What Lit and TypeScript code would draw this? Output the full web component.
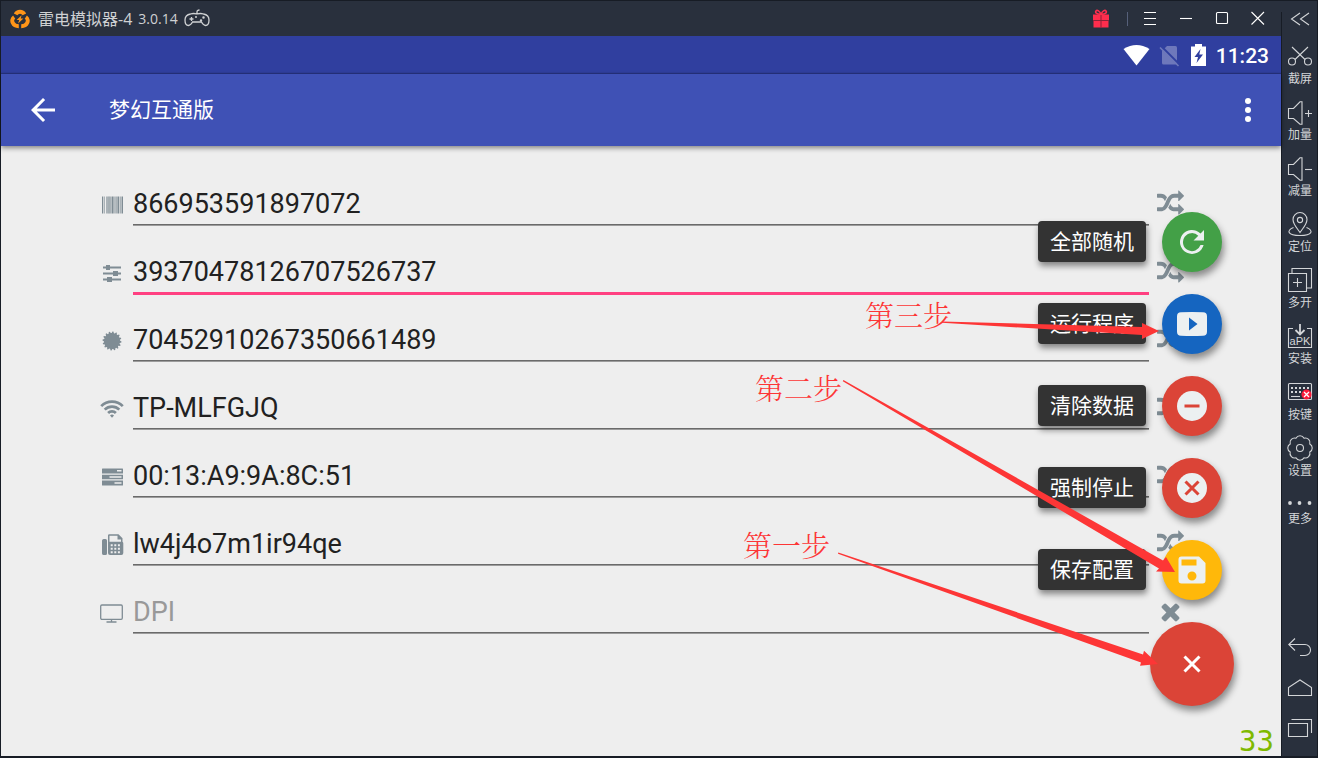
import { LitElement, html, svg, css, nothing } from "lit";
import type { SVGTemplateResult } from "lit";
import { customElement, state } from "lit/decorators.js";
import { classMap } from "lit/directives/class-map.js";

interface Field {
  id: string;
  label: string;
  value: string;
  placeholder?: string;
  icon: SVGTemplateResult;
  action: "shuffle" | "clear";
}

interface Tool {
  label: string;
  icon: SVGTemplateResult;
  short?: boolean;
}

interface QuickAction {
  label: string;
  tone: string;
  icon: SVGTemplateResult;
}

const gearPoints = (teeth: number, outer: number, inner: number): string => {
  const points: string[] = [];
  for (let i = 0; i < teeth * 4; i++) {
    const radius = i % 4 < 2 ? outer : inner;
    const angle = ((i + 0.5) / (teeth * 4)) * Math.PI * 2;
    points.push(`${(12 + radius * Math.sin(angle)).toFixed(2)},${(12 - radius * Math.cos(angle)).toFixed(2)}`);
  }
  return points.join(" ");
};

const scallop = (count: number, radius: number): string => {
  const at = (i: number) => {
    const a = ((i + 0.5) / count) * Math.PI * 2;
    return `${(12 + radius * Math.sin(a)).toFixed(2)} ${(12 - radius * Math.cos(a)).toFixed(2)}`;
  };
  let d = `M${at(0)}`;
  for (let i = 1; i <= count; i++) d += `A4.6 4.6 0 0 1 ${at(i)}`;
  return d + "Z";
};

const barcode = svg`<g>
  <path d="M2 3.500h1v17h-1zM8.500 3.500h1v17h-1zM11.500 3.500h1.500v17h-1.500zM14.500 3.500h1v17h-1zM18 3.500h1v17h-1zM21.500 3.500h1.500v17h-1.500z"/>
  <path opacity=".6" d="M3.500 3.500h1.500v17H3.500zM6 3.500h2.500v17H6zM9.500 3.500h1.500v17H9.500zM13 3.500h1v17h-1zM16 3.500h2v17h-2zM19.500 3.500h1.500v17h-1.500z"/></g>`;
const sliders = svg`<path d="M3 5.500h3V4h4v1.500h11v2H10V9H6V7.500H3zM3 11.500h10V10h5v1.500h3v2h-3V15h-5v-1.500H3zM3 17.500h4V16h5v1.500h9v2h-9V21H7v-1.500H3z"/>`;
const certificate = svg`<polygon points=${gearPoints(16, 9.5, 8)}/>`;
const wifi = svg`<g fill="none" stroke="currentColor" stroke-width="2.700">
  <path d="M1.200 9.100a15.300 15.300 0 0 1 21.600 0M4.700 12.600a10.300 10.300 0 0 1 14.600 0M8.100 16a5.500 5.500 0 0 1 7.800 0"/>
  <path d="M10 18.500a3 3 0 0 1 4 0L12 20.800z" fill="currentColor" stroke="none"/></g>`;
const server = svg`<path fill-rule="evenodd" d="M2.500 3.500h20a.5.500 0 0 1 .5.500v4.500h-21V4a.5.500 0 0 1 .5-.5zM17 5v1.500h4.500V5zM2 9.700h21v4.600h-21zM9.500 11.300v1.400h12v-1.400zM2 15.500h21V20a.5.500 0 0 1-.5.500h-20a.5.500 0 0 1-.5-.5zM14.500 17.300v1.500h7v-1.500z"/>`;
const fax = svg`<path transform="translate(.5 .500)" fill-rule="evenodd" d="M3.500 5.500H5A1.500 1.500 0 0 1 6.500 7v13A1.500 1.500 0 0 1 5 21.500H3.500A1.800 1.800 0 0 1 1.500 20V7a1.800 1.800 0 0 1 2-1.500zM7.500 2A1.200 1.200 0 0 1 8.700.800H18l4 4V8.300a2 2 0 0 1 .8 1.700v9.500a2 2 0 0 1-2 2H9.500a2 2 0 0 1-2-2zM9 2.200v6h11.500V6H17V2.200zM10.200 10.700v2h2v-2zm3.600 0v2h2v-2zm3.600 0v2h2v-2zM10.200 14.300v2h2v-2zm3.600 0v2h2v-2zm3.600 0v2h2v-2zM10.200 17.800v2h2v-2zm3.600 0v2h2v-2zm3.600 0v2h2v-2z"/>`;
const monitor = svg`<g fill="none" stroke="currentColor" stroke-width="1.300">
  <rect x=".7" y="4" width="21.600" height="14.300" rx="1.200"/><path d="M11.500 18.300v2.500M6.500 21h10"/></g>`;

const FIELDS: Field[] = [
  { id: "imei", label: "IMEI", value: "866953591897072", icon: barcode, action: "shuffle" },
  { id: "iccid", label: "ICCID", value: "39370478126707526737", icon: sliders, action: "shuffle" },
  { id: "serial", label: "Serial", value: "70452910267350661489", icon: certificate, action: "shuffle" },
  { id: "ssid", label: "SSID", value: "TP-MLFGJQ", icon: wifi, action: "shuffle" },
  { id: "mac", label: "MAC", value: "00:13:A9:9A:8C:51", icon: server, action: "shuffle" },
  { id: "device", label: "Device", value: "lw4j4o7m1ir94qe", icon: fax, action: "shuffle" },
  { id: "dpi", label: "DPI", value: "", placeholder: "DPI", icon: monitor, action: "clear" },
];

const SHUFFLE =
  "M666 481q-60 92-137 273-22-45-37-72.5t-40.5-63.5-51-56.5-63-35-81.5-14.5h-224q-14 0-23-9t-9-23v-192q0-14 9-23t23-9h224q250 0 410 225zm1126 799q0 14-9 23l-320 320q-9 9-23 9-13 0-22.5-9.5t-9.5-22.5v-192q-32 0-85 .5t-81 1-73-1-71-5-64-10.5-63-18.5-58-28.5-59-40-55-53.5-56-69.5q59-93 136-273 22 45 37 72.5t40.5 63.5 51 56.5 63 35 81.5 14.5h256v-192q0-14 9-23t23-9q12 0 24 10l319 319q9 9 9 23zm0-896q0 14-9 23l-320 320q-9 9-23 9-13 0-22.5-9.5t-9.5-22.5v-192h-256q-48 0-87 15t-69 45-51 61.5-45 77.5q-32 62-78 171-29 66-49.5 111t-54 105-64 100-74 83-90 68.5-106.5 42-128 16.5h-224q-14 0-23-9t-9-23v-192q0-14 9-23t23-9h224q48 0 87-15t69-45 51-61.5 45-77.5q32-62 78-171 29-66 49.500-111t54-105 64-100 74-83 90-68.500 106.500-42 128-16.500h256v-192q0-14 9-23t23-9q12 0 24 10l319 319q9 9 9 23z";
const TIMES =
  "M1490 1322q0 40-28 68l-136 136q-28 28-68 28t-68-28l-294-294-294 294q-28 28-68 28t-68-28l-136-136q-28-28-28-68t28-68l294-294-294-294q-28-28-28-68t28-68l136-136q28-28 68-28t68 28l294 294 294-294q28-28 68-28t68 28l136 136q28 28 28 68t-28 68l-294 294 294 294q28 28 28 68z";

const speaker = svg`<path d="M.5 8.500h5L12 1.800h2v22.400h-2L5.500 18.500h-5z"/>`;

const TOOLS: Tool[] = [
  { label: "截屏", icon: svg`<circle cx="4" cy="17.500" r="3.500"/><circle cx="20" cy="17.500" r="3.500"/><path d="M4 3l13 12.500M20 3L7 15.500"/>` },
  { label: "加量", icon: svg`${speaker}<path d="M17 13.500h7M20.500 10v7"/>` },
  { label: "减量", icon: svg`${speaker}<path d="M17 13.500h7"/>` },
  { label: "定位", icon: svg`<path d="M12 20.500C8.500 15.500 5 12 5 7.500a7 7 0 0 1 14 0C19 12 15.500 15.500 12 20.500zM5.500 15.500C-2 18.500-.5 23.500 12 23.500s14-5 6.500-8"/><circle cx="12" cy="8" r="2.600"/>` },
  { label: "多开", icon: svg`<path d="M.5 5.500h18v18H.5zM4 5V.5h19.500V20H19M9.500 10v9M5 14.500h9"/>` },
  { label: "安装", icon: svg`<path d="M5 4.500H.5v19h23v-19H19"/><path d="M12 0v10M7.500 6l4.500 4.500L16.500 6" stroke-width="1.800"/><text class="apk" x="12" y="21" text-anchor="middle">aPK</text>` },
  { label: "按键", icon: svg`<rect x=".5" y="3.500" width="23" height="16" rx="1"/><path d="M3 8h18M3 12h12" stroke-width="2" stroke-dasharray="2 2"/><path d="M3 16.500h9"/><circle cx="18.500" cy="14.500" r="5" fill="#fb1c3c" stroke="none"/><path d="M16 12l5 5m0-5l-5 5" stroke="#fff" stroke-width="1.300"/>` },
  { label: "设置", icon: svg`<path d=${scallop(8, 10.6)}/><circle cx="12" cy="12" r="3.500"/>` },
  { label: "更多", short: true, icon: svg`<g fill="currentColor" stroke="none"><circle cx="2" cy="11" r="1.900"/><circle cx="11.500" cy="11" r="1.900"/><circle cx="21.500" cy="11" r="1.900"/></g>` },
];

const NAV: Tool[] = [
  { label: "返回", icon: svg`<path d="M7 2.500L.8 8.500l6.200 6M.8 8.500H17a5.500 5.500 0 0 1 0 11h-5"/>` },
  { label: "主页", icon: svg`<path d="M.5 19.500v-8L12 4l11.500 7.500v8z"/>` },
  { label: "任务", icon: svg`<path d="M.5 7.500h19v13H.5zM3.500 3.500h20V17"/>` },
];

const QUICK: QuickAction[] = [
  { label: "全部随机", tone: "green", icon: svg`<path d="M26.500 9.500A12 12 0 1 0 29.600 21h-3.100a9 9 0 1 1-2.200-9.300L19.500 16.500H30V6z"/>` },
  { label: "运行程序", tone: "blue", icon: svg`<path fill-rule="evenodd" d="M7 6.300q11-.6 22 0 4 .2 4 4v15.400q0 3.800-4 4-11 .6-22 0-4-.2-4-4V10.300q0-3.800 4-4zM15 11.500v13l8.500-6.500z"/>` },
  { label: "清除数据", tone: "red", icon: svg`<circle cx="18" cy="18" r="15"/><path class="cut" d="M10.500 18h15"/>` },
  { label: "强制停止", tone: "red", icon: svg`<circle cx="18" cy="18" r="15"/><path class="cut" d="M11.500 11.500l13 13m0-13l-13 13"/>` },
  { label: "保存配置", tone: "amber", icon: svg`<path fill-rule="evenodd" d="M7.500 4.500H25L31.500 11v17.500a3 3 0 0 1-3 3h-21a3 3 0 0 1-3-3v-21a3 3 0 0 1 3-3zM7.500 7.500v6h15v-6zM18 19.500a4.500 4.500 0 1 0 0 9 4.500 4.500 0 0 0 0-9z"/>` },
];

@customElement("side-bar")
export class SideBar extends LitElement {
  static styles = css`
    :host {
      display: flex;
      flex-direction: column;
      justify-content: space-between;
      padding: 8px 0 16px 2px;
      color: #d3d5d8;
    }
    .group {
      display: flex;
      flex-direction: column;
      align-items: center;
      gap: 14px;
    }
    .nav {
      gap: 16px;
    }
    button {
      display: flex;
      flex-direction: column;
      align-items: center;
      gap: 2px;
      padding: 0;
      border: 0;
      background: none;
      color: inherit;
      font: 12px/16px "Noto Sans CJK SC", sans-serif;
      white-space: nowrap;
      cursor: pointer;
    }
    svg {
      display: block;
      width: 24px;
      height: 24px;
      fill: none;
      stroke: currentColor;
      stroke-width: 1.1;
      overflow: visible;
    }
    .short svg {
      height: 16px;
    }
    .collapse svg {
      height: 21px;
    }
    .apk {
      font: 11px "Liberation Sans", sans-serif;
      fill: currentColor;
      stroke: none;
    }
  `;

  render() {
    return html`
      <div class="group">
        <button class="collapse" aria-label="收起">
          <svg viewBox="0 0 24 21"><path d="M12 4L3.500 10l8.500 6M21 4l-8.500 6 8.500 6" /></svg>
        </button>
        ${TOOLS.map(
          (t) => html`<button class=${classMap({ short: !!t.short })}>
            <svg viewBox=${t.short ? "0 0 24 16" : "0 0 24 24"}>${t.icon}</svg>${t.label}
          </button>`,
        )}
      </div>
      <div class="group nav">
        ${NAV.map((t) => html`<button aria-label=${t.label}><svg viewBox="0 0 24 24">${t.icon}</svg></button>`)}
      </div>
    `;
  }
}

@customElement("title-bar")
export class TitleBar extends LitElement {
  static styles = css`
    :host {
      display: flex;
      align-items: center;
      height: 35px;
      padding: 0 5px 0 9px;
      color: #cfd1d3;
      font: 16px/24px "Open Sans", "Noto Sans CJK SC", sans-serif;
    }
    .logo {
      width: 20px;
      height: 20px;
      margin-right: 8px;
    }
    .version {
      margin-left: 6px;
      font-size: 14px;
    }
    .pad {
      width: 26px;
      height: 20px;
      margin-left: 6px;
    }
    .spacer {
      flex: 1;
    }
    button {
      display: grid;
      place-items: center;
      width: 36px;
      height: 33px;
      padding: 0;
      border: 0;
      background: none;
      color: #fff;
      cursor: pointer;
    }
    .line {
      width: 14px;
      height: 15px;
      fill: none;
      stroke: currentColor;
      stroke-width: 1.1;
    }
    .gift {
      width: 18px;
      height: 20px;
    }
    .divider {
      width: 1px;
      height: 14px;
      margin: 0 4px 0 17px;
      background: #56607a;
    }
  `;

  render() {
    return html`
      <svg class="logo" viewBox="0 0 20 20">
        <g fill="none" stroke="#ff9518" stroke-width="4">
          <path d="M5.600 5.400A5 5 0 0 1 14.400 5.400" />
          <path d="M4.200 8.200A4.300 4.300 0 0 0 2.900 14q1.400 3.200 5.900 3.200" />
          <path d="M15.800 8.200A4.300 4.300 0 0 1 17.100 14q-1.400 3.200-5.900 3.200" />
        </g>
        <path d="M11.600 6.300L6.600 11h2.600l-1.100 3.500 5.300-5h-2.700z" fill="#ff9518" />
      </svg>
      <span>雷电模拟器-4</span><span class="version">3.0.14</span>
      <svg class="pad" viewBox="0 0 26 20" fill="none" stroke="currentColor" stroke-width="1.300">
        <path d="M13 5.500V3q0-2 2.500-2M6.500 5q3-1 6.500 0 3.500-1 6.500 0Q25 6 25 11q0 5.500-3.500 5.500-2 0-4-3.500H8.500q-2 3.500-4 3.500Q1 16.500 1 11 1 6 6.500 5z" />
        <path d="M5.500 10h4M7.500 8v4" />
        <circle cx="17" cy="11.500" r=".6" /><circle cx="19.500" cy="8.500" r=".6" /><circle cx="12" cy="8" r=".4" />
      </svg>
      <span class="spacer"></span>
      <svg class="gift" viewBox="0 0 18 20">
        <path fill="#ff2d4d" d="M1 5.500h16v5.500H1zM1.500 12h15v6.500h-15z" />
        <path fill="none" stroke="#ff2d4d" stroke-width="1.600" d="M9 5.500C4 5 3 3.500 4 2s4 0 5 3.500C10 2 13 .500 14 2s0 3-5 3.500z" />
        <path stroke="#8c2338" d="M1 11.500h16M9 6v12.500" />
      </svg>
      <span class="divider"></span>
      <button aria-label="菜单"><svg class="line" viewBox="0 0 14 15"><path d="M1 1.500h12M1 7.500h12M1 13.500h12" /></svg></button>
      <button aria-label="最小化"><svg class="line" viewBox="0 0 14 15"><path d="M1 7.500h12" /></svg></button>
      <button aria-label="最大化"><svg class="line" viewBox="0 0 14 15"><rect x="1.500" y="1.500" width="11" height="11" rx="1" /></svg></button>
      <button aria-label="关闭"><svg class="line" viewBox="0 0 14 15"><path d="M.5 1l12.500 12.500m0-12.500L.5 13.500" /></svg></button>
    `;
  }
}

@customElement("action-menu")
export class ActionMenu extends LitElement {
  static styles = css`
    :host {
      display: flex;
      flex-direction: column;
      align-items: flex-end;
      gap: 22px;
    }
    .item {
      display: flex;
      align-items: center;
      gap: 16px;
      padding-right: 12px;
    }
    label {
      margin-bottom: 1px;
      padding: 0 12px 3px;
      border-radius: 4px;
      background: #333;
      color: #fff;
      font: 21px/38px "Noto Sans CJK SC", sans-serif;
      box-shadow: 1px 4px 6px rgba(0, 0, 0, 0.45);
      cursor: pointer;
    }
    button {
      display: grid;
      place-items: center;
      width: 60px;
      height: 60px;
      padding: 0;
      border: 0;
      border-radius: 50%;
      color: #ecf0f1;
      box-shadow: 2px 5px 7px rgba(0, 0, 0, 0.42);
      cursor: pointer;
    }
    svg {
      width: 36px;
      height: 36px;
      fill: currentColor;
    }
    .cut {
      stroke: #db4437;
      stroke-width: 3;
    }
    .green {
      background: #43a047;
    }
    .blue {
      background: #1565c0;
    }
    .red,
    .main {
      background: #db4437;
    }
    .amber {
      background: #ffb80a;
    }
    .main {
      width: 84px;
      height: 84px;
      color: #fff;
    }
  `;

  render() {
    return html`
      ${QUICK.map(
        (a, i) => html`<div class="item">
          <label for="quick-${i}">${a.label}</label>
          <button id="quick-${i}" class=${a.tone}><svg viewBox="0 0 36 36">${a.icon}</svg></button>
        </div>`,
      )}
      <button class="main" aria-label="关闭菜单">
        <svg viewBox="0 0 36 36"><path d="M10.500 10.500l15 15m0-15l-15 15" stroke="currentColor" stroke-width="3" /></svg>
      </button>
    `;
  }
}

@customElement("app-root")
export class AppRoot extends LitElement {
  @state() private active = "iccid";

  static styles = css`
    :host {
      box-sizing: border-box;
      display: grid;
      grid-template-columns: minmax(0, 1fr) 37px;
      min-height: 100vh;
      border: solid #171c25;
      border-width: 1px 0 2px 1px;
      background: #29303d;
      font-family: Roboto, "Noto Sans CJK SC", sans-serif;
    }
    .window {
      display: flex;
      flex-direction: column;
    }
    side-bar {
      border-right: 1px solid #171c25;
      background: linear-gradient(#171c25, #171c25) 0 11px / 1px 100% no-repeat;
    }
    .screen {
      position: relative;
      display: flex;
      flex-direction: column;
      flex: 1;
      background: #eee;
    }
    .status {
      display: flex;
      align-items: center;
      justify-content: flex-end;
      gap: 4px;
      height: 38px;
      padding-right: 12px;
      background: #303f9f;
      color: #fff;
      font-size: 21px;
      font-weight: 500;
    }
    .status svg {
      width: 27px;
      height: 27px;
      fill: currentColor;
    }
    .status span {
      padding-top: 2px;
    }
    .appbar {
      display: flex;
      align-items: center;
      height: 72px;
      padding: 0 15px 0 24px;
      background: #3f51b5;
      color: #fff;
      box-shadow: 0 2px 5px rgba(0, 0, 0, 0.45), 0 -1px 1px rgba(0, 0, 0, 0.2);
    }
    h1 {
      flex: 1;
      margin: 0 0 0 48px;
      padding-bottom: 4px;
      font: 21px/32px "Noto Sans CJK SC", sans-serif;
    }
    .appbar button {
      padding: 0;
      border: 0;
      background: none;
      color: inherit;
      cursor: pointer;
    }
    .appbar svg {
      display: block;
      width: 36px;
      height: 36px;
      fill: currentColor;
    }
    form {
      display: flex;
      flex-direction: column;
      gap: 26px;
      padding: 38px 97px 38px 99px;
      color: #7f8c94;
    }
    .row {
      display: flex;
      align-items: center;
    }
    .row label {
      margin-right: 9px;
    }
    .row label svg {
      display: block;
      width: 24px;
      height: 24px;
      fill: currentColor;
    }
    input {
      box-sizing: border-box;
      flex: 1;
      min-width: 0;
      height: 42px;
      padding: 0 0 2px;
      border: 0;
      border-bottom: 1px solid #9c9c9c;
      border-radius: 0;
      outline: 0;
      background: none;
      box-shadow: inset 0 -1px #6a6a6a;
      color: #212121;
      font: 27px/38px Roboto, sans-serif;
    }
    input::placeholder {
      color: #999;
      opacity: 1;
    }
    input.active {
      border-color: #ff4081;
      box-shadow: inset 0 -1px #ff4081, 0 1px #ff4081;
    }
    .row button {
      align-self: flex-start;
      height: 38px;
      margin-left: 8px;
      padding: 0;
      border: 0;
      background: none;
      color: inherit;
      cursor: pointer;
    }
    .row button svg {
      display: block;
      width: 27px;
      height: 27px;
      fill: currentColor;
    }
    action-menu {
      position: absolute;
      right: 47px;
      bottom: 50px;
    }
    .steps {
      position: absolute;
      right: 0;
      bottom: 0;
      width: 560px;
      height: 480px;
      fill: #fd3636;
      pointer-events: none;
    }
    .step {
      font: 300 29px "Noto Serif CJK SC", "Noto Sans CJK SC", serif;
    }
    .fps {
      position: absolute;
      right: 7px;
      bottom: 0;
      color: #7fb900;
      font: 29px/30px "DejaVu Sans Mono", monospace;
    }
  `;

  private renderField(f: Field) {
    return html`<div class="row">
      <label for=${f.id}><svg viewBox="0 0 24 24" role="img" aria-label=${f.label}>${f.icon}</svg></label>
      <input
        id=${f.id}
        class=${classMap({ active: f.id === this.active })}
        type="text"
        spellcheck="false"
        autocomplete="off"
        .value=${f.value}
        placeholder=${f.placeholder ?? nothing}
        @focus=${() => (this.active = f.id)}
      />
      <button type="button" aria-label=${f.action === "shuffle" ? "随机" : "清除"}>
        <svg viewBox="0 0 1792 1792"><path d=${f.action === "shuffle" ? SHUFFLE : TIMES} /></svg>
      </button>
    </div>`;
  }

  render() {
    return html`
      <div class="window">
        <title-bar></title-bar>
        <main class="screen">
          <div class="status">
            <svg viewBox="0 0 27 27"><path d="M.5 7q13-8 26 0L13.500 23.500z" /></svg>
            <svg viewBox="0 0 27 27">
              <path fill="#6e78bb" d="M13 4h8.500A1.500 1.500 0 0 1 23 5.500V21a1.500 1.500 0 0 1-1.500 1.500h-12A1.500 1.500 0 0 1 8 21V9z" />
              <path d="M7.500 4.500l18 18" stroke="#303f9f" stroke-width="2" />
              <path d="M6 5.500L24.500 24" stroke="#6e78bb" stroke-width="1.600" />
            </svg>
            <svg viewBox="0 0 27 27">
              <path fill-rule="evenodd" d="M6 4.500h4V2h7v2.500h4V24H6zM15.500 7L9.500 15h3.500L11.500 21l6.500-8.500h-3.700z" />
            </svg>
            <span>11:23</span>
          </div>
          <header class="appbar">
            <button aria-label="返回">
              <svg viewBox="0 0 24 24"><path d="M20 11H7.830l5.590-5.590L12 4l-8 8 8 8 1.410-1.410L7.830 13H20z" /></svg>
            </button>
            <h1>梦幻互通版</h1>
            <button aria-label="更多选项">
              <svg viewBox="0 0 24 24"><circle cx="12" cy="6" r="2" /><circle cx="12" cy="12" r="2" /><circle cx="12" cy="18" r="2" /></svg>
            </button>
          </header>
          <form @submit=${(e: Event) => e.preventDefault()}>${FIELDS.map((f) => this.renderField(f))}</form>
          <action-menu></action-menu>
          <svg class="steps" viewBox="721 276 560 480">
            <text class="step" x="865" y="327">第三步</text>
            <text class="step" x="755" y="400">第二步</text>
            <text class="step" x="743" y="557">第一步</text>
            <path d="M942 321.500L1142 327V323L1159 331 1142 339V335L942 322.800z" />
            <path d="M843.400 380L1163 560.500 1166 557 1175 572 1156 571.500 1159 568.500 842.800 381.200z" />
            <path d="M838.300 552.400L1143 654.500 1144 650.700 1158 664 1140 665.700 1141 662.500 838 553.800z" />
          </svg>
          <span class="fps">33</span>
        </main>
      </div>
      <side-bar></side-bar>
    `;
  }
}
